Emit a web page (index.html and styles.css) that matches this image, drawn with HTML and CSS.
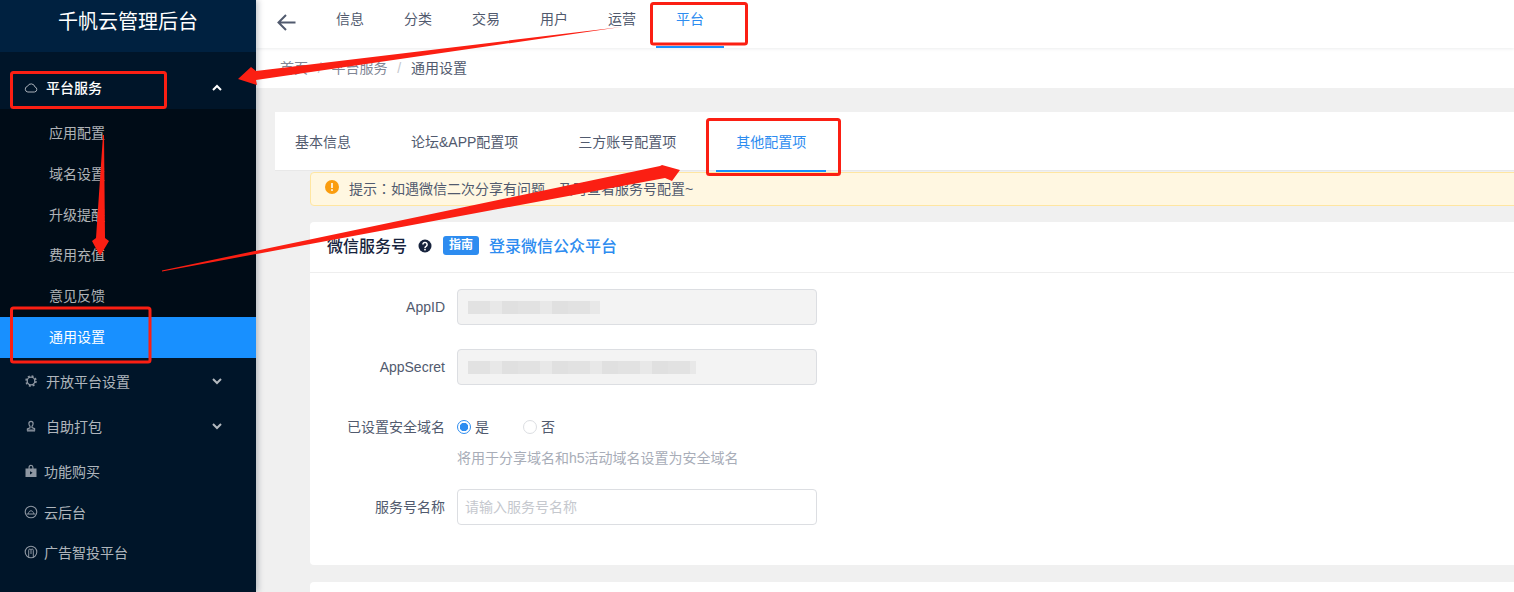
FILE: index.html
```html
<!DOCTYPE html>
<html lang="zh-CN">
<head>
<meta charset="utf-8">
<title>千帆云管理后台</title>
<link rel="stylesheet" href="styles.css">
</head>
<body>
<div class="app">
  <aside class="sidebar">
    <div class="logo">千帆云管理后台</div>
    <nav class="menu">
      <div class="group open">
        <svg class="ico" viewBox="0 0 14 14"><path d="M3.800 11h6.600a2.600 2.600 0 0 0 .5-5.100A3.900 3.900 0 0 0 3.500 5.300 2.900 2.900 0 0 0 3.800 11z" fill="none" stroke="currentColor" stroke-width="1"/></svg>
        <span class="grow">平台服务</span>
        <svg class="chev" viewBox="0 0 12 12"><path d="M2 8l4-4 4 4" fill="none" stroke="currentColor" stroke-width="2"/></svg>
      </div>
      <div class="submenu">
        <a class="sub">应用配置</a>
        <a class="sub">域名设置</a>
        <a class="sub">升级提醒</a>
        <a class="sub">费用充值</a>
        <a class="sub">意见反馈</a>
        <a class="sub active">通用设置</a>
      </div>
      <div class="group">
        <svg class="ico" viewBox="0 0 14 14"><circle cx="7" cy="7" r="3.800" fill="none" stroke="currentColor" stroke-width="1.300"/><circle cx="7" cy="7" r="5" fill="none" stroke="currentColor" stroke-width="1.500" stroke-dasharray="2 1.930"/></svg>
        <span class="grow">开放平台设置</span>
        <svg class="chev" viewBox="0 0 12 12"><path d="M2 4l4 4 4-4" fill="none" stroke="currentColor" stroke-width="2"/></svg>
      </div>
      <div class="group">
        <svg class="ico" viewBox="0 0 14 14"><path d="M7 2.300c1.300 0 2.100.9 2.100 2.200 0 1.100-.5 2.200-1.100 2.700v1.300l2.600 1.200v1.500H3.400V10l2.600-1.200V7.200C5.400 6.700 4.900 5.600 4.900 4.500 4.900 3.200 5.700 2.300 7 2.300z" fill="none" stroke="currentColor" stroke-width="1.200"/><path d="M3 11.500h8v1H3z" fill="currentColor"/></svg>
        <span class="grow">自助打包</span>
        <svg class="chev" viewBox="0 0 12 12"><path d="M2 4l4 4 4-4" fill="none" stroke="currentColor" stroke-width="2"/></svg>
      </div>
      <a class="link first">
        <svg class="ico" viewBox="0 0 14 14"><path d="M1.500 4.500h3V3.200a2.500 2.500 0 0 1 5 0v1.300h3V13h-11zM5.700 4.500h2.600V3.200a1.300 1.300 0 0 0-2.600 0z" fill="currentColor" fill-rule="evenodd"/><path d="M6 7.200l2.600 1.600L6 10.400z" fill="#001529"/></svg>
        <span>功能购买</span>
      </a>
      <a class="link">
        <svg class="ico" viewBox="0 0 14 14"><circle cx="7" cy="7" r="5.800" fill="none" stroke="currentColor" stroke-width="1.100"/><path d="M2.500 9h9M4.200 8.900C4.600 6.900 5.600 5.800 7 5.800s2.400 1.100 2.800 3.100" fill="none" stroke="currentColor" stroke-width="1"/></svg>
        <span>云后台</span>
      </a>
      <a class="link">
        <svg class="ico" viewBox="0 0 14 14"><circle cx="7" cy="7" r="5.800" fill="none" stroke="currentColor" stroke-width="1.100"/><path d="M4.700 12.500V5.200a1.150 1.150 0 0 1 2.300 0 1.150 1.150 0 0 1 2.300 0v7.300M7 5.200V9" fill="none" stroke="currentColor" stroke-width="1"/></svg>
        <span>广告智投平台</span>
      </a>
    </nav>
  </aside>

  <main class="main">
    <header class="topbar">
      <div class="back">
        <svg viewBox="0 0 20 20" width="20" height="20"><path d="M19.500 10.500H2.500M10 3l-7.500 7.500L10 18" fill="none" stroke="#515a6e" stroke-width="2"/></svg>
      </div>
      <a class="top-tab">信息</a>
      <a class="top-tab">分类</a>
      <a class="top-tab">交易</a>
      <a class="top-tab">用户</a>
      <a class="top-tab">运营</a>
      <a class="top-tab current">平台</a>
    </header>
    <div class="crumbs">
      <span>首页</span><i>/</i><span>平台服务</span><i>/</i><b>通用设置</b>
    </div>
    <section class="content">
      <div class="tabs">
        <a class="tab">基本信息</a>
        <a class="tab">论坛&amp;APP配置项</a>
        <a class="tab">三方账号配置项</a>
        <a class="tab current">其他配置项</a>
      </div>
      <div class="inner">
        <div class="alert">
          <svg class="alert-ico" viewBox="0 0 14 14"><circle cx="7" cy="7" r="7" fill="#fa9d0f"/><rect x="6.200" y="3" width="1.600" height="5" fill="#fff"/><rect x="6.200" y="9.200" width="1.600" height="1.700" fill="#fff"/></svg>
          <span>提示<span class="centered-punct" lang="zh-TW">：</span>如遇微信二次分享有问题，及时查看服务号配置~</span>
        </div>
        <div class="card">
          <div class="card-head">
            <h2>微信服务号</h2>
            <svg class="help" viewBox="0 0 14 14"><circle cx="7" cy="7" r="6.500" fill="#17233d"/><path d="M4.900 5.500a2.100 2.100 0 1 1 3.200 1.800c-.8.500-1.100.8-1.100 1.600" fill="none" stroke="#fff" stroke-width="1.500"/><rect x="6.200" y="9.800" width="1.600" height="1.600" fill="#fff"/></svg>
            <span class="badge">指南</span>
            <a class="head-link">登录微信公众平台</a>
          </div>
          <div class="card-body">
            <div class="row">
              <label class="label">AppID</label>
              <div class="input disabled"><span class="blur short"></span></div>
            </div>
            <div class="row">
              <label class="label">AppSecret</label>
              <div class="input disabled"><span class="blur long"></span></div>
            </div>
            <div class="row tight">
              <label class="label">已设置安全域名</label>
              <div class="col">
                <div class="radios">
                  <span class="radio checked"></span><span class="radio-text">是</span>
                  <span class="radio"></span><span class="radio-text">否</span>
                </div>
                <p class="hint">将用于分享域名和h5活动域名设置为安全域名</p>
              </div>
            </div>
            <div class="row">
              <label class="label">服务号名称</label>
              <div class="input placeholder">请输入服务号名称</div>
            </div>
          </div>
        </div>
        <div class="card"></div>
      </div>
    </section>
  </main>
</div>

<svg class="marks" viewBox="0 0 1514 592" width="1514" height="592" aria-hidden="true">
  <g fill="none" stroke="#fb1f13" stroke-width="3">
    <rect x="651.500" y="3.500" width="95" height="40.500" rx="2"/>
    <rect x="11.500" y="72.500" width="154" height="35" rx="2"/>
    <rect x="707.500" y="119.500" width="132" height="55" rx="2"/>
    <rect x="11.500" y="308" width="138.500" height="54" rx="2"/>
  </g>
  <g fill="#fb1f13">
    <polygon points="621,27 256,71 251,67 238,79 257,85 256,80"/>
    <polygon points="103,135 104,135 105,238 109,241 100,256 92,241 96,238"/>
    <polygon points="162,270.500 660,166 662,165 680,170 672,181 665,178 162,271.500"/>
  </g>
</svg>
</body>
</html>
```

FILE: styles.css
```css
* { box-sizing: border-box; }
html, body { margin: 0; height: 100%; overflow: hidden; }
body {
  font-family: "Liberation Sans", "Noto Sans CJK SC", sans-serif;
  font-size: 14px;
  color: #515a6e;
  background: #f0f0f0;
}
a { color: inherit; text-decoration: none; }

.app { display: flex; width: 1514px; height: 592px; }

/* sidebar */
.sidebar {
  flex: 0 0 256px;
  background: #001529;
  box-shadow: 2px 0 6px rgba(0, 21, 41, .25);
  position: relative;
  z-index: 2;
  overflow: hidden;
}
.logo {
  height: 52px;
  padding-bottom: 8px;
  background: #002140;
  color: #fff;
  font-size: 20px;
  line-height: 44px;
  text-align: center;
}
.menu { padding-top: 16px; color: rgba(255, 255, 255, .7); }
.group {
  display: flex;
  align-items: center;
  height: 45px;
  padding: 0 33px 2px 24px;
}
.group.open { height: 41px; color: #fff; font-weight: 500; }
.group.open .ico { color: #aab1ba; }
.group.open .grow { margin-bottom: 2px; }
.ico { width: 14px; height: 14px; margin-right: 8px; flex: none; color: #8e97a2; }
.grow { flex: 1; }
.chev { width: 12px; height: 12px; flex: none; }
.submenu { padding-top: 4px; background: #000c17; }
.sub { display: block; height: 40.800px; line-height: 40.800px; padding-left: 49px; }
.sub.active { height: 41px; background: #1890ff; color: #fff; }
.submenu + .group { margin-top: 2px; }
.link { display: flex; align-items: center; height: 40.500px; padding: 0 0 2px 24px; }
.link .ico { margin-right: 6px; }
.link.first { margin-top: 2px; }

/* top */
.main { flex: 1; min-width: 0; display: flex; flex-direction: column; }
.topbar {
  display: flex;
  height: 48px;
  background: #fff;
  box-shadow: 0 1px 3px rgba(0, 21, 41, .08);
  position: relative;
}
.back { width: 60px; padding: 12px 0 0 20px; }
.top-tab {
  width: 68px;
  text-align: center;
  line-height: 38px;
}
.top-tab.current { color: #2d8cf0; border-bottom: 2px solid #1890ff; height: 48px; }
.crumbs {
  height: 40px;
  background: #fff;
  line-height: 40px;
  padding-left: 24px;
  color: #808695;
}
.crumbs i { font-style: normal; color: #c5c8ce; margin: 0 9.800px; }
.crumbs b { font-weight: 400; color: #515a6e; }

/* content */
.content { flex: 1; padding: 24px 0 0 19px; overflow: hidden; }
.tabs {
  display: flex;
  gap: 20px;
  height: 59px;
  margin-right: -10px;
  background: #fff;
  border-bottom: 1px solid #e8e8e8;
}
.tab { padding: 0 20px; line-height: 60px; height: 59px; }
.tab.current { color: #2d8cf0; border-bottom: 2px solid #1890ff; height: 60px; }
.inner { padding: 1px 0 0 35px; }
.alert {
  display: flex;
  align-items: center;
  height: 34px;
  margin-right: -10px;
  padding: 0 0 3px 14px;
  background: #fff7e1;
  border: 1px solid #ffe6a1;
  border-radius: 4px 0 0 4px;
}
.centered-punct { font-family: "Noto Sans CJK TC", sans-serif; }
.alert-ico { width: 14px; height: 14px; margin: -1px 10px 0 0; flex: none; }

.card {
  margin: 16px -10px 0 0;
  background: #fff;
  border-radius: 4px 0 0 4px;
  min-height: 60px;
}
.card + .card { margin-top: 17px; }
.card-head {
  display: flex;
  align-items: center;
  height: 51px;
  padding: 0 0 5px 17px;
  border-bottom: 1px solid #eee;
}
.card-head h2 { margin: 0; font-size: 16px; font-weight: 500; color: #17233d; }
.help { width: 14px; height: 14px; margin: 2px 0 0 11px; }
.badge {
  width: 36px;
  height: 19px;
  margin: 2px 10px 0 11px;
  background: #2d8cf0;
  border-radius: 3px;
  color: #fff;
  font-size: 12px;
  font-weight: 700;
  line-height: 19px;
  text-align: center;
}
.head-link { color: #2d8cf0; font-size: 16px; font-weight: 500; }
.card-body { padding: 16px 0 40px; }
.row { display: flex; margin-bottom: 24px; }
.row:last-child { margin-bottom: 0; }
.row.tight { margin-bottom: 21px; }
.label {
  width: 135px;
  margin-right: 12px;
  text-align: right;
  line-height: 36px;
}
.input {
  display: flex;
  align-items: center;
  width: 360px;
  height: 36px;
  padding-left: 7px;
  border: 1px solid #dcdee2;
  border-radius: 4px;
}
.input.disabled { background: #f3f3f3; padding-left: 10px; }
.input.placeholder { color: #c5c8ce; padding-bottom: 2px; }
.blur {
  height: 13px;
  background: repeating-linear-gradient(90deg, #e2e2e2 0 22px, #e8e8e8 22px 34px, #e0e0e0 34px 50px);
}
.blur.short { width: 132px; }
.blur.long { width: 228px; }
.radios { display: flex; align-items: center; height: 36px; }
.radio {
  width: 14px;
  height: 14px;
  border: 1px solid #dcdee2;
  border-radius: 50%;
  flex: none;
  background: #fff;
  margin-right: 4px;
}
.radio.checked {
  border-color: #2d8cf0;
  background: radial-gradient(circle, #2d8cf0 0 4px, #fff 4.500px);
}
.radio-text { margin-right: 34px; padding-bottom: 2px; }
.hint { margin: 3px 0 0; line-height: 20px; color: #a8adb8; }

/* annotation layer painted over the screenshot */
.marks { position: absolute; left: 0; top: 0; z-index: 5; pointer-events: none; }
```
